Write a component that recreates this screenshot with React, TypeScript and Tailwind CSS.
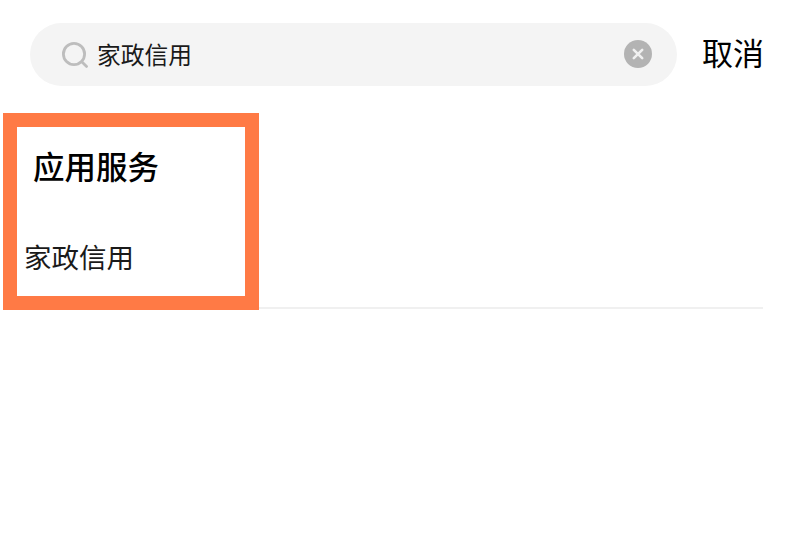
import React from 'react';

const FONT = "font-['Liberation_Sans','Noto_Sans_CJK_SC',sans-serif]";

const SearchIcon = () => (
  <svg width="28" height="28" viewBox="0 0 28 28" fill="none" stroke="#bdbdbd" strokeWidth="2.8" strokeLinecap="round">
    <circle cx="13" cy="13" r="10.6" />
    <path d="M21 21l4.6 4.4" />
  </svg>
);

const ClearIcon = () => (
  <svg width="28" height="28" viewBox="0 0 28 28">
    <circle cx="14" cy="14" r="14" fill="#b3b3b3" />
    <path d="M9.8 9.8l8.4 8.4M18.2 9.8l-8.4 8.4" stroke="#f0f0f0" strokeWidth="2.6" strokeLinecap="round" />
  </svg>
);

const App: React.FC = () => {
  return (
    <div className={`${FONT} w-[795px] h-[542px] bg-white overflow-hidden text-black`}>
      {/* search bar */}
      <div className="flex items-center pt-[23px] pl-[30px] pr-[31px]">
        <div className="flex-1 h-[63px] rounded-[32px] bg-[#f4f4f4] flex items-center pl-[31px] pr-[25px]">
          <SearchIcon />
          <span className="ml-[8px] mt-[3px] text-[23.75px] leading-none text-[#1a1a1a]">家政信用</span>
          <div className="ml-auto flex -mt-[2px]">
            <ClearIcon />
          </div>
        </div>
        <span className="ml-[25px] text-[31px] leading-none">取消</span>
      </div>

      {/* results */}
      <div className="flex items-end mt-[27px] ml-[3px] mr-[32px]">
        <div className="w-[256px] h-[197px] border-[14px] border-[#ff7a45] shrink-0">
          <div className="pl-[16px] pt-[23px] text-[31.5px] leading-[36px] font-medium">应用服务</div>
          <div className="pl-[7px] mt-[55px] text-[27.5px] leading-[36px] text-[#1a1a1a]">家政信用</div>
        </div>
        <div className="flex-1 h-[2px] mb-[1px] bg-[#f0f0f0]" />
      </div>
    </div>
  );
};

export default App;
